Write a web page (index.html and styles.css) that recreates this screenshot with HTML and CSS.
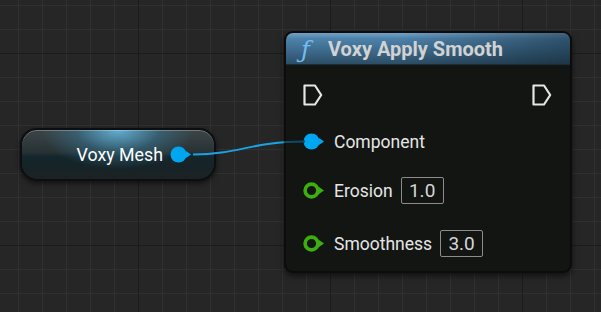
FILE: index.html
```html
<!DOCTYPE html>
<html lang="en">
<head>
    <meta charset="UTF-8">
    <title>Blueprint | Voxy Apply Smooth</title>
    <link rel="stylesheet" href="styles.css">
</head>
<body>
<div class="graph">

    <svg class="wires" width="601" height="312">
        <defs>
            <linearGradient id="wire-fade" gradientUnits="userSpaceOnUse" x1="193" y1="0" x2="303" y2="0">
                <stop offset="0" stop-color="#1ba2e4"/>
                <stop offset="0.82" stop-color="#1ba2e4"/>
                <stop offset="0.83" stop-color="#0f4a68"/>
                <stop offset="1" stop-color="#0f4a68"/>
            </linearGradient>
        </defs>
        <path d="M193 154.5 C 240 154.5, 250 141.5, 305 141.5" fill="none" stroke="url(#wire-fade)" stroke-width="2"/>
    </svg>

    <div class="node node-var">
        <span class="var-name">Voxy Mesh</span>
        <svg class="pin" width="23" height="17" viewBox="0 0 23 17">
            <circle cx="8.5" cy="8.5" r="8" fill="#00a6f0"/>
            <polygon points="16,5 21,8.5 16,12" fill="#00a6f0"/>
        </svg>
    </div>

    <div class="node node-func">
        <div class="node-head">
            <span class="func-icon">&#402;</span>
            <span class="func-title">Voxy Apply Smooth</span>
        </div>
        <div class="node-body">
            <div class="row row-exec">
                <svg class="pin" width="20" height="22" viewBox="0 0 20 22">
                    <path d="M1.5 1.5 H12 L18.2 11 L12 20.5 H1.5 Z" fill="none" stroke="#e6e6e6" stroke-width="2.2" stroke-linejoin="round"/>
                </svg>
                <svg class="pin" width="20" height="22" viewBox="0 0 20 22">
                    <path d="M1.5 1.5 H12 L18.2 11 L12 20.5 H1.5 Z" fill="none" stroke="#e6e6e6" stroke-width="2.2" stroke-linejoin="round"/>
                </svg>
            </div>

            <div class="row row-comp">
                <svg class="pin" width="23" height="17" viewBox="0 0 23 17">
                    <circle cx="8.5" cy="8.5" r="8" fill="#00a6f0"/>
                    <polygon points="16,5 21,8.5 16,12" fill="#00a6f0"/>
                </svg>
                <span class="label">Component</span>
            </div>

            <div class="row row-erosion">
                <svg class="pin" width="23" height="17" viewBox="0 0 23 17">
                    <circle cx="8.5" cy="8.5" r="6.4" fill="none" stroke="#3cae0e" stroke-width="3.6"/>
                    <polygon points="16,5 21,8.5 16,12" fill="#3cae0e"/>
                </svg>
                <span class="label">Erosion</span>
                <span class="value">1.0</span>
            </div>

            <div class="row row-smooth">
                <svg class="pin" width="23" height="17" viewBox="0 0 23 17">
                    <circle cx="8.5" cy="8.5" r="6.4" fill="none" stroke="#3cae0e" stroke-width="3.6"/>
                    <polygon points="16,5 21,8.5 16,12" fill="#3cae0e"/>
                </svg>
                <span class="label">Smoothness</span>
                <span class="value">3.0</span>
            </div>
        </div>
    </div>

</div>
</body>
</html>
```

FILE: styles.css
```css
html, body {
    margin: 0;
    padding: 0;
}

body {
    font-family: Roboto, "Noto Sans", sans-serif;
    background-color: #262626;
}

/* grid: minor every 24px, major every 8 cells */
.graph {
    position: relative;
    width: 601px;
    height: 312px;
    overflow: hidden;
    background-color: #262626;
    background-image:
        linear-gradient(90deg, #1b1b1b 1px, transparent 1px),
        linear-gradient(#1b1b1b 1px, transparent 1px),
        linear-gradient(90deg, #303030 1px, transparent 1px),
        linear-gradient(#303030 1px, transparent 1px);
    background-size: 192px 192px, 192px 192px, 24px 24px, 24px 24px;
    background-position: 138px 0, 0 53px, 18px 0, 0 5px;
}

.wires {
    position: absolute;
    left: 0;
    top: 0;
    z-index: 2;
    pointer-events: none;
}

.node {
    position: absolute;
    box-sizing: border-box;
    z-index: 1;
}

.pin {
    display: block;
    flex: none;
}

/* variable getter */
.node-var {
    left: 20px;
    top: 128px;
    width: 196px;
    height: 53px;
    border: 2px solid #0c0e0f;
    border-radius: 17px;
    display: flex;
    align-items: center;
    justify-content: flex-end;
    padding-right: 21px;
    background:
        radial-gradient(ellipse 40% 80% at 50% 0%, rgba(100, 180, 218, 0.95), rgba(55, 120, 150, 0.5) 55%, rgba(30, 60, 75, 0) 100%),
        linear-gradient(#3c4447 0%, #283235 45%, #13262c 55%, #172326 80%, #1d2223 100%);
    box-shadow: 0 2px 5px rgba(0, 0, 0, 0.6), inset 0 1px 0 rgba(255, 255, 255, 0.28);
}

.var-name {
    color: #ffffff;
    font-size: 17.8px;
    margin-right: 7px;
}

/* function call */
.node-func {
    left: 284px;
    top: 31px;
    width: 288px;
    height: 242px;
    border: 2px solid #0b0c0b;
    border-radius: 9px;
    background: #131513;
    box-shadow: 0 3px 6px rgba(0, 0, 0, 0.55);
    display: flex;
    flex-direction: column;
}

.node-head {
    height: 32px;
    flex: none;
    display: flex;
    align-items: center;
    padding-left: 15px;
    border-radius: 7px 7px 0 0;
    background:
        linear-gradient(90deg, rgba(0, 0, 0, 0) 40%, rgba(10, 25, 35, 0.45) 100%),
        linear-gradient(#72a2c6 0%, #4d82aa 18%, #3d6a8b 55%, #2b4b62 100%);
    box-shadow: inset 0 -1px 0 #1c2c36;
}

.func-icon {
    color: #72bcf0;
    font-family: "DejaVu Serif", serif;
    font-style: italic;
    font-size: 24px;
    width: 27px;
    margin-top: 2px;
}

.func-title {
    color: #d2d2d2;
    font-weight: bold;
    font-size: 20px;
}

.node-body {
    padding: 19px 18px 0 17px;
}

.row {
    display: flex;
    align-items: center;
    height: 27px;
}

.row-exec {
    height: 22px;
    justify-content: space-between;
}

.row-comp {
    margin-top: 22px;
}

.row-erosion {
    margin-top: 22px;
}

.row-smooth {
    margin-top: 26px;
}

.label {
    color: #e6e6e6;
    font-size: 17.5px;
    margin-left: 8px;
}

.value {
    box-sizing: border-box;
    height: 27px;
    width: 43px;
    margin-left: 8px;
    border: 1px solid #8c8c8c;
    border-radius: 2px;
    color: #d6d6d6;
    font-size: 19px;
    display: flex;
    align-items: center;
    justify-content: center;
}
```
